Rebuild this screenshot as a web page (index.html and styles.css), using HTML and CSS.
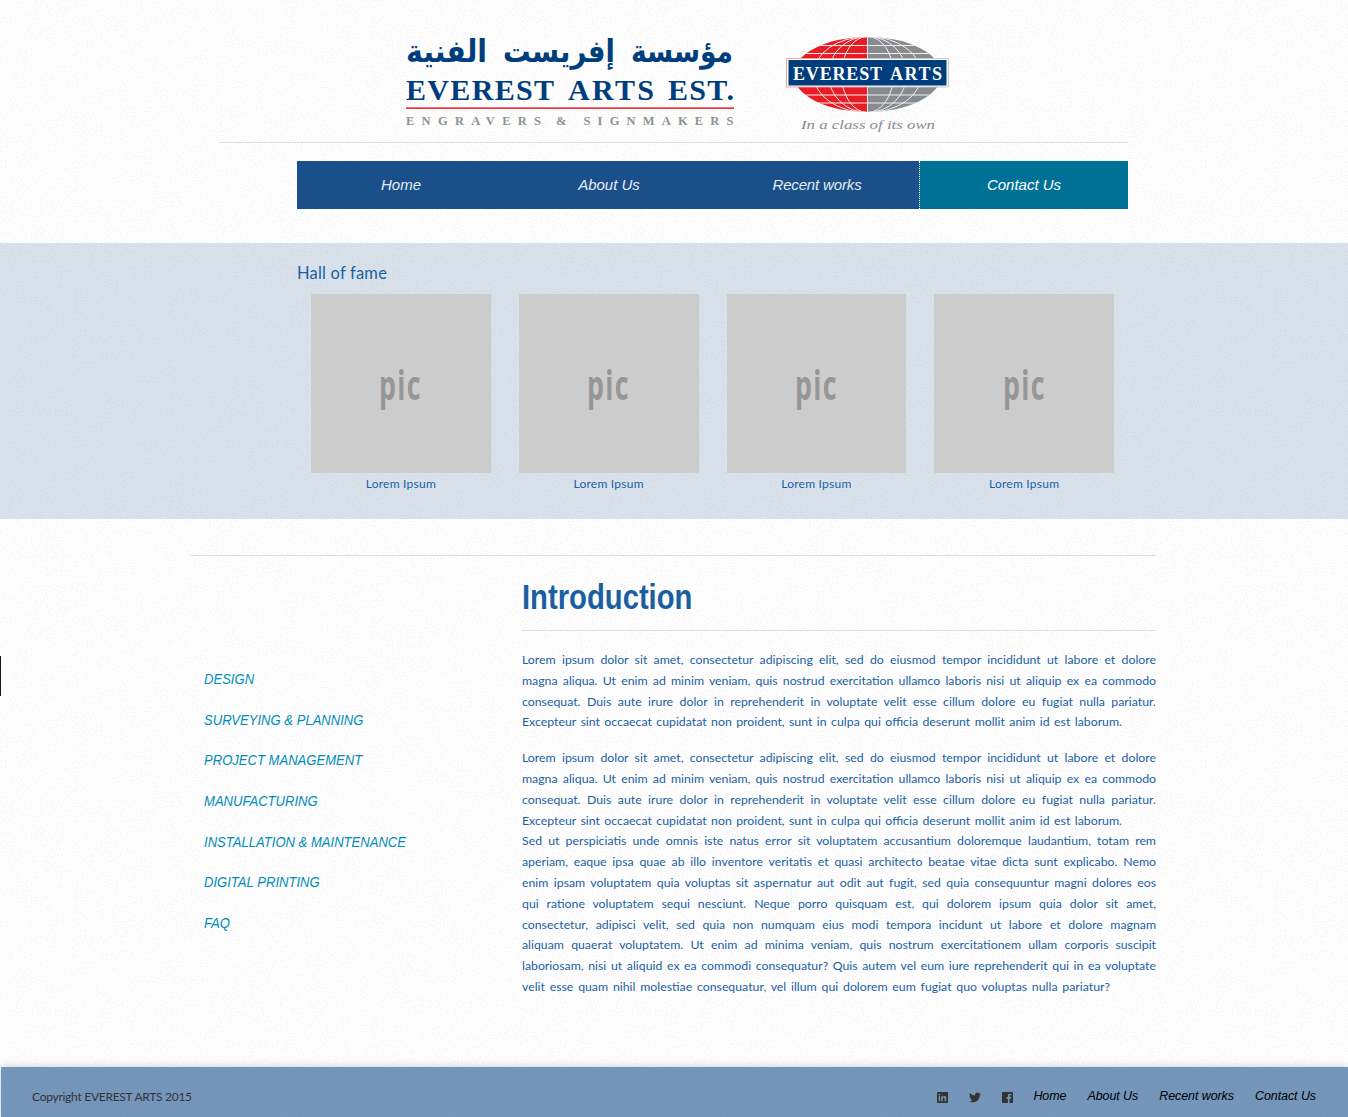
FILE: index.html
```html
<!DOCTYPE html>
<html lang="en">
<head>
<meta charset="utf-8">
<title>Everest Arts</title>
<link rel="stylesheet" href="styles.css">
</head>
<body>
<div class="edge-tab"></div>
<header class="header">
  <svg class="logo-name" width="332" height="100" viewBox="404 32 332 100" role="img" aria-label="Everest Arts Est.">
    <text class="arabic" x="733" y="62" textLength="102" lengthAdjust="spacingAndGlyphs" direction="rtl">مؤسسة</text>
    <text class="arabic" x="615" y="62" textLength="112" lengthAdjust="spacingAndGlyphs" direction="rtl">إفريست</text>
    <text class="arabic" x="487" y="62" textLength="81" lengthAdjust="spacingAndGlyphs" direction="rtl">الفنية</text>
    <text class="wordmark" x="406" y="100" textLength="148">EVEREST</text>
    <text class="wordmark" x="568" y="100" textLength="86">ARTS</text>
    <text class="wordmark" x="668" y="100" textLength="66">EST.</text>
    <rect x="406" y="107.4" width="328" height="1.5" fill="#ed1c24"/>
    <text class="trade" x="406" y="125" textLength="135">ENGRAVERS</text>
    <text class="trade" x="556" y="125">&amp;</text>
    <text class="trade" x="583.5" y="125" textLength="150">SIGNMAKERS</text>
  </svg>
  <svg class="logo-globe" width="166" height="100" viewBox="784 32 166 100" role="img" aria-label="Everest Arts, in a class of its own">
    <defs><clipPath id="globe"><ellipse cx="867.5" cy="74.5" rx="74" ry="37.5"/></clipPath></defs>
    <g clip-path="url(#globe)">
      <rect x="786" y="36" width="81.5" height="78" fill="#e81c24"/>
      <rect x="867.5" y="36" width="82" height="78" fill="#868b90"/>
      <g fill="none" stroke="#f3eeee" stroke-width="1">
        <path d="M786 45.5h164M786 53.5h164M786 95h164M786 103h164M867.5 36v78"/>
        <ellipse cx="867.5" cy="74.5" rx="26" ry="38"/>
        <ellipse cx="867.5" cy="74.5" rx="39" ry="38"/>
        <ellipse cx="867.5" cy="74.5" rx="54" ry="38"/>
      </g>
    </g>
    <path d="M867.5 58.5h-81v28.5h81" fill="#fff" stroke="#f2a0a4"/>
    <path d="M867.5 58.5h81v28.5h-81" fill="#fff" stroke="#c3c7cc"/>
    <rect x="788.5" y="60" width="158" height="25.5" fill="#003d7d"/>
    <text class="badge-name" x="793" y="80" textLength="89">EVEREST</text>
    <text class="badge-name" x="890" y="80" textLength="52">ARTS</text>
    <text class="motto" x="801" y="129" textLength="134" lengthAdjust="spacingAndGlyphs">In a class of its own</text>
  </svg>
</header>
<nav class="nav">
  <a>Home</a><a>About Us</a><a>Recent works</a><a class="active">Contact Us</a>
</nav>
<section class="fame">
  <div class="fame-inner">
    <h2>Hall of fame</h2>
    <div class="cards">
      <figure><div class="pic"><span>pic</span></div><figcaption>Lorem Ipsum</figcaption></figure>
      <figure><div class="pic"><span>pic</span></div><figcaption>Lorem Ipsum</figcaption></figure>
      <figure><div class="pic"><span>pic</span></div><figcaption>Lorem Ipsum</figcaption></figure>
      <figure><div class="pic"><span>pic</span></div><figcaption>Lorem Ipsum</figcaption></figure>
    </div>
  </div>
</section>
<main class="main">
  <ul class="services">
    <li><span>DESIGN</span></li>
    <li><span>SURVEYING &amp; PLANNING</span></li>
    <li><span>PROJECT MANAGEMENT</span></li>
    <li><span>MANUFACTURING</span></li>
    <li><span>INSTALLATION &amp; MAINTENANCE</span></li>
    <li><span>DIGITAL PRINTING</span></li>
    <li><span>FAQ</span></li>
  </ul>
  <article class="intro">
    <h1><span>Introduction</span></h1>
    <p>
      <span>Lorem ipsum dolor sit amet, consectetur adipiscing elit, sed do eiusmod tempor incididunt ut labore et dolore</span>
      <span>magna aliqua. Ut enim ad minim veniam, quis nostrud exercitation ullamco laboris nisi ut aliquip ex ea commodo</span>
      <span>consequat. Duis aute irure dolor in reprehenderit in voluptate velit esse cillum dolore eu fugiat nulla pariatur.</span>
      <span class="end-a">Excepteur sint occaecat cupidatat non proident, sunt in culpa qui officia deserunt mollit anim id est laborum.</span>
    </p>
    <p>
      <span>Lorem ipsum dolor sit amet, consectetur adipiscing elit, sed do eiusmod tempor incididunt ut labore et dolore</span>
      <span>magna aliqua. Ut enim ad minim veniam, quis nostrud exercitation ullamco laboris nisi ut aliquip ex ea commodo</span>
      <span>consequat. Duis aute irure dolor in reprehenderit in voluptate velit esse cillum dolore eu fugiat nulla pariatur.</span>
      <span class="end-a">Excepteur sint occaecat cupidatat non proident, sunt in culpa qui officia deserunt mollit anim id est laborum.</span>
      <span>Sed ut perspiciatis unde omnis iste natus error sit voluptatem accusantium doloremque laudantium, totam rem</span>
      <span>aperiam, eaque ipsa quae ab illo inventore veritatis et quasi architecto beatae vitae dicta sunt explicabo. Nemo</span>
      <span>enim ipsam voluptatem quia voluptas sit aspernatur aut odit aut fugit, sed quia consequuntur magni dolores eos</span>
      <span>qui ratione voluptatem sequi nesciunt. Neque porro quisquam est, qui dolorem ipsum quia dolor sit amet,</span>
      <span>consectetur, adipisci velit, sed quia non numquam eius modi tempora incidunt ut labore et dolore magnam</span>
      <span>aliquam quaerat voluptatem. Ut enim ad minima veniam, quis nostrum exercitationem ullam corporis suscipit</span>
      <span>laboriosam, nisi ut aliquid ex ea commodi consequatur? Quis autem vel eum iure reprehenderit qui in ea voluptate</span>
      <span class="end-b">velit esse quam nihil molestiae consequatur, vel illum qui dolorem eum fugiat quo voluptas nulla pariatur?</span>
    </p>
  </article>
</main>
<footer class="footer">
  <span class="copyright">Copyright EVEREST ARTS 2015</span>
  <div class="social">
    <svg width="11" height="11" viewBox="0 0 11 11"><path fill="#333" fill-rule="evenodd" d="M.7 0h9.600q.7 0 .7.700v9.600q0 .7-.7.700H.7Q0 11 0 10.300V.7Q0 0 .7 0zM1.700 4.200v5h1.500v-5zM2.450 1.700a.85.850 0 1 0 0 1.700.85.850 0 0 0 0-1.700zM4.300 4.200v5h1.500V6.600c0-1.500 1.800-1.500 1.800 0v2.600h1.600V6c0-2.300-2.500-2.400-3.400-1.100v-.7z"/></svg>
    <svg width="12" height="11" viewBox="0 0 24 22"><path fill="#333" d="M24 3.600c-.9.400-1.800.7-2.800.8 1-.6 1.800-1.600 2.200-2.700-1 .6-2 1-3.100 1.200A4.900 4.900 0 0 0 11.900 7.400C7.800 7.200 4.200 5.200 1.700 2.200A4.900 4.900 0 0 0 3.200 8.700c-.8 0-1.600-.2-2.200-.6 0 2.300 1.600 4.400 3.900 4.900-.7.200-1.500.2-2.200.1.600 2 2.400 3.400 4.600 3.400A9.900 9.900 0 0 1 0 18.500 13.900 13.900 0 0 0 7.500 20.700c9.100 0 14.300-7.700 14-14.600 1-.7 1.800-1.600 2.500-2.500z"/></svg>
    <svg width="11" height="11" viewBox="0 0 11 11"><path fill="#333" d="M.7 0h9.600q.7 0 .7.700v9.600q0 .7-.7.700H7.600V6.800H9l.25-1.700H7.600V4.100c0-.5.200-.8.900-.8h.8V1.800C7 1.400 5.900 2.200 5.900 3.800v1.300H4.500v1.700h1.400V11H.7Q0 11 0 10.300V.7Q0 0 .7 0z"/></svg>
  </div>
  <div class="links"><a>Home</a><a>About Us</a><a>Recent works</a><a>Contact Us</a></div>
</footer>
</body>
</html>
```
FILE: styles.css
```css
* { box-sizing: border-box; }
body {
  margin: 0;
  height: 1117px;
  overflow: hidden;
  display: flex;
  flex-direction: column;
  font-family: Lato, "Open Sans", sans-serif;
  color: #1b5fa3;
  background: #fff url("data:image/svg+xml,%3Csvg xmlns='http://www.w3.org/2000/svg' width='300' height='300'%3E%3Cfilter id='n' x='0' y='0' width='100%25' height='100%25'%3E%3CfeTurbulence type='fractalNoise' baseFrequency='.8' numOctaves='2' stitchTiles='stitch'/%3E%3CfeColorMatrix values='0 0 0 0 .3 0 0 0 0 .3 0 0 0 0 .3 .32 0 0 0 -.145'/%3E%3C/filter%3E%3Crect width='300' height='300' filter='url(%23n)'/%3E%3C/svg%3E");
}
.edge-tab { position: absolute; left: 0; top: 656px; width: 1px; height: 40px; background: #111622; }
.header {
  flex: none;
  width: 909px;
  height: 143px;
  margin-left: 219px;
  padding: 32px 0 0 185px;
  display: flex;
  gap: 48px;
  border-bottom: 1px solid #ddd;
}
.header svg { overflow: visible; }
.arabic { font: bold 31px "DejaVu Sans", sans-serif; fill: #003d7d; }
.wordmark { font: bold 30px "Liberation Serif", serif; fill: #003d7d; }
.trade { font: bold 12.5px "Liberation Serif", serif; fill: #8c9298; }
.badge-name { font: bold 18px "Liberation Serif", serif; fill: #fff; }
.motto { font: italic 13.5px "Liberation Serif", serif; fill: #858b91; }
.nav {
  flex: none;
  width: 831px;
  height: 48px;
  margin: 18px 0 34px 297px;
  display: grid;
  grid-template-columns: 208px 208px 206px 209px;
  background: #1a4f89;
  font: italic 15px/48px "Liberation Sans", sans-serif;
  color: #e4ebf3;
  text-align: center;
}
.nav .active { background: #007196; color: #fff; border-left: 1px dotted #fff; }
.nav a:nth-child(3) { padding-left: 2px; letter-spacing: -.15px; }
.fame { flex: none; height: 276px; background: rgba(26, 79, 137, .16); padding: 20px 0 0 297px; }
.fame-inner { width: 831px; }
.fame h2 { margin: 0 0 11px; font-size: 16.5px; line-height: 20px; font-weight: 400; letter-spacing: .2px; }
.cards { display: grid; grid-template-columns: repeat(4, 1fr); }
.cards figure { margin: 0 14px; text-align: center; }
.pic { height: 179px; display: flex; align-items: center; justify-content: center; background: #ccc; }
.pic span { font: bold 42px/60px "Open Sans", sans-serif; color: #969696; transform: scaleX(.64); letter-spacing: 2px; }
.cards figcaption { font-size: 12px; line-height: 22px; letter-spacing: .25px; }
.main {
  flex: none;
  width: 965px;
  height: 512px;
  margin: 36px 0 0 191px;
  border-top: 1px solid #ddd;
  display: grid;
  grid-template-columns: 331px 634px;
}
.services { list-style: none; margin: 0; padding: 103px 0 0 13px; color: #008cba; font: italic 14px/40.7px "Liberation Sans", sans-serif; }
.services li { height: 40.7px; white-space: nowrap; }
.services span { display: inline-block; transform: scaleX(.933); transform-origin: 0 50%; }
.intro h1 { margin: 0 0 19px; height: 75px; padding-top: 19px; border-bottom: 1px solid #ddd; font: bold 35px/43px "Liberation Sans", sans-serif; }
.intro h1 span { display: inline-block; transform: scaleX(.835); transform-origin: 0 50%; }
.intro p { margin: 0 0 15px; font-size: 12.3px; line-height: 20.8px; }
.intro p span { display: block; white-space: nowrap; text-align: justify; text-align-last: justify; }
.intro p .end-a { width: 600px; }
.intro p .end-b { width: 588px; }
.footer {
  flex: none;
  height: 50px;
  margin-left: 1px;
  padding: 10px 32px 0 31px;
  display: flex;
  align-items: flex-start;
  background: rgba(64, 111, 162, .73);
  box-shadow: 0 0 9px rgba(0, 0, 0, .2);
  color: #333;
}
.copyright { font-size: 12px; line-height: 40px; letter-spacing: -.27px; margin-right: auto; }
.social { display: flex; gap: 21px; padding-top: 15px; margin-right: 20px; }
.links { display: flex; gap: 21px; font: italic 12.5px/39px "Liberation Sans", sans-serif; letter-spacing: -.08px; color: #000; }
```
